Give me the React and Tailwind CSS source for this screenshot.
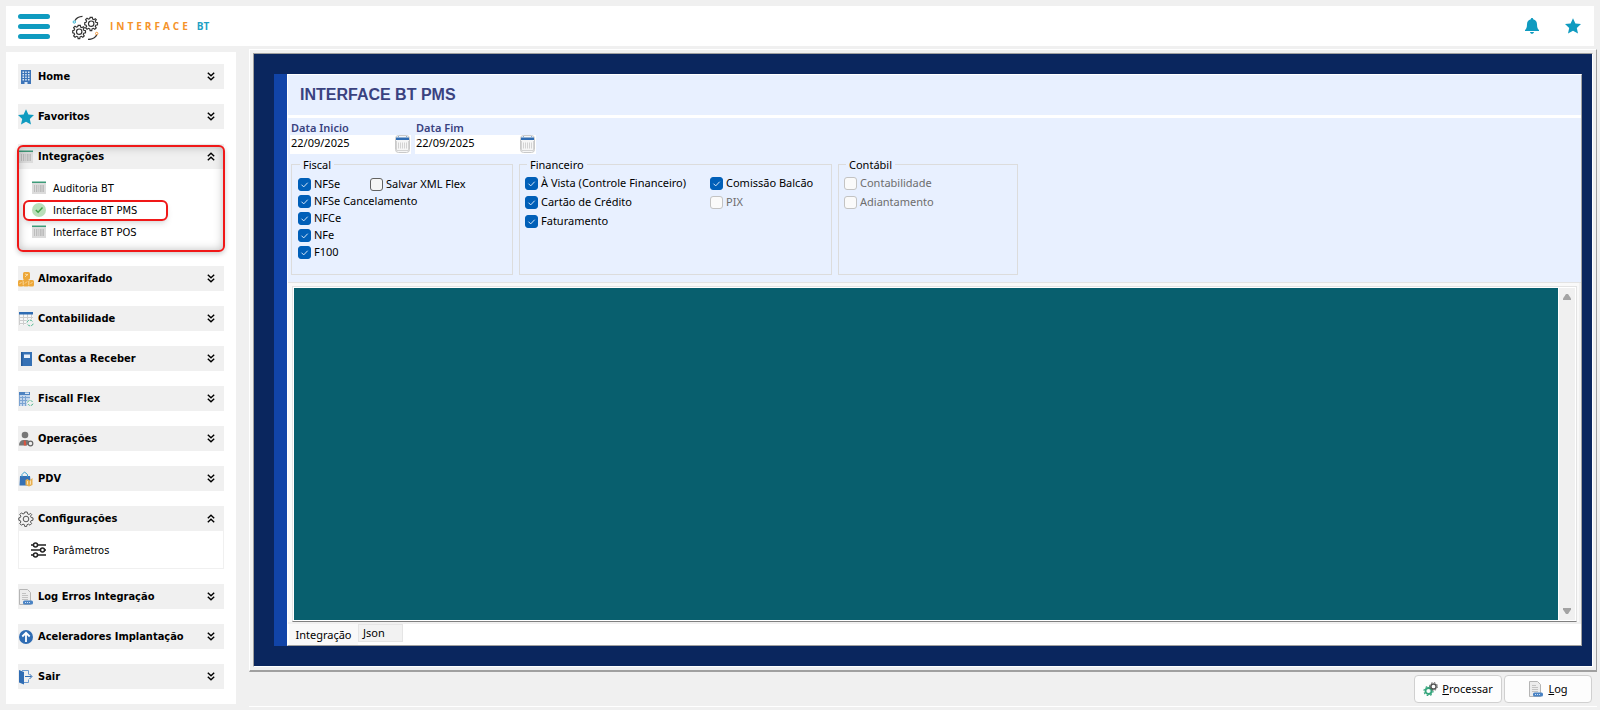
import React, { useState } from 'react';

const Star = () => (
  <svg width="16" height="16" viewBox="0 0 16 16">
    <path fill="#0f9bc0" d="M8 .3l2.400 5.200 5.600.6-4.200 3.800 1.200 5.700L8 12.800l-5 2.800 1.200-5.700L0 6.100l5.600-.6z" />
  </svg>
);

const Bell = () => (
  <svg width="16" height="16" viewBox="0 0 16 16">
    <path fill="#0f9bc0" d="M8 0c.7 0 1.200.5 1.200 1.200C11.600 1.800 13 3.700 13 6.200c0 3.300.8 4.700 2 5.800v1H1v-1c1.200-1.100 2-2.500 2-5.800 0-2.500 1.400-4.400 3.800-5C6.800.5 7.300 0 8 0zM6 14h4c-.2 1.200-1 1.800-2 1.800S6.200 15.200 6 14z" />
  </svg>
);

const gearPath =
  'M6.800 1h2.400l.4 1.900 1.400.6L12.600 2.400l1 1 .1.100L12.500 5.100l.6 1.400 1.900.4v2.300l-1.900.4-.6 1.400 1.100 1.600-1.600 1.600-1.600-1.100-1.400.6-.4 1.900H6.800l-.4-1.900-1.400-.6-1.600 1.100-1.600-1.600 1.100-1.600-.6-1.400L.8 9.200V6.900l1.500-.4.6-1.400L1.800 3.500l1.600-1.600L5 3l1.400-.6z';

const Gear = () => (
  <svg width="16" height="16" viewBox="0 0 16 16" fill="none" stroke="#555">
    <path d={gearPath} />
    <circle cx="8" cy="8" r="2.8" />
  </svg>
);

const Logo = () => (
  <svg width="28" height="28" viewBox="0 0 28 28" fill="none">
    <g stroke="#333" strokeWidth="1.300">
      <g transform="translate(12 4.500) scale(.9)">
        <path d={gearPath} />
        <circle cx="8" cy="8" r="3" />
      </g>
      <g transform="translate(0 12.500) scale(.9)">
        <path d={gearPath} />
        <circle cx="8" cy="8" r="3" />
      </g>
      <path d="M3 8.500C4.500 6 7 4.600 10.500 4.400M25 22.500c-1.500 3-4.700 4.900-9 5" />
    </g>
    <circle cx="2.300" cy="10" r="1.200" stroke="#35b3d1" />
    <circle cx="24.700" cy="21.500" r="1.200" stroke="#f59a3c" />
  </svg>
);

const Building = () => (
  <svg width="16" height="16" viewBox="0 0 16 16">
    <path fill="#3d74b8" d="M3 1h10v14H3z" />
    <path fill="#dce8f5" d="M4.500 2.500H6V4H4.500zM7.200 2.500h1.500V4H7.200zM10 2.500h1.500V4H10zM4.500 5H6v1.500H4.500zM7.200 5h1.500v1.500H7.200zM10 5h1.500v1.500H10zM4.500 7.500H6V9H4.500zM7.200 7.500h1.500V9H7.200zM10 7.500h1.500V9H10zM4.500 10H6v1.500H4.500zM7.200 10h1.500v1.500H7.200zM10 10h1.500v1.500H10zM6.500 13h3v2h-3z" />
  </svg>
);

const Barcode = () => (
  <svg width="16" height="16" viewBox="0 0 16 16">
    <path fill="#dcdcdc" d="M1 2h14v12H1z" />
    <path fill="#3d9b79" d="M1 1.500h14V3H1z" />
    <path stroke="#bdbdbd" d="M3.500 5v7M5.500 5v7M9.500 5v7M12.500 5v7" />
    <path stroke="#c9c9c9" strokeWidth="2" d="M7.500 5v7M11 5v7" />
  </svg>
);

const CheckCircle = () => (
  <svg width="16" height="16" viewBox="0 0 16 16">
    <circle cx="8" cy="8" r="7" fill="#b9dfba" />
    <path d="M4.800 8l2.300 2.300L11.500 5.500" fill="none" stroke="#3fa046" strokeWidth="1.400" />
  </svg>
);

const Boxes = () => (
  <svg width="16" height="16" viewBox="0 0 16 16">
    <g fill="#eda83a">
      <rect x="5" y="1" width="7" height="7.500" rx="1.500" />
      <rect x="0" y="9" width="5.400" height="6.500" rx="1.500" />
      <rect x="5" y="8" width="6" height="7.500" rx="1.500" />
      <rect x="10.600" y="9" width="5.400" height="6.500" rx="1.500" />
    </g>
    <path stroke="#fbe3b8" strokeWidth=".8" fill="none" d="M7 3l3 1M7 6l3-3M1.500 13l2-2M7 12.500l2-2M12.500 13l2-2M5.200 10v4M10.800 10v4" />
  </svg>
);

const TableSync = () => (
  <svg width="16" height="16" viewBox="0 0 16 16" fill="none">
    <path fill="#f7f7f7" d="M1 1h14v13H1z" />
    <path stroke="#cdcdcd" d="M1 6.500h14M1 9.500h14M1 12.500h14M1.500 3v11M5.500 3v11M9.500 3v11M13.500 3v11" />
    <path fill="#2f6cb3" d="M1 1h14v2.500H1z" />
    <circle cx="12" cy="12" r="4" fill="#f0f0f0" />
    <path stroke="#56b894" d="M9 11.500c.4-2.800 4.400-3.300 5.600-.8M15.200 12.700c-.6 2.600-4.400 3-5.700.6" strokeDasharray="3 1" />
  </svg>
);

const Book = () => (
  <svg width="16" height="16" viewBox="0 0 16 16">
    <path fill="#3571b5" d="M3 1h11v14H3z" />
    <path fill="#245a99" d="M3 1h1.500v14H3z" />
    <path fill="#e8f0fa" d="M6 3.500h6v3.500H6z" />
  </svg>
);

const Calculator = () => (
  <svg width="16" height="16" viewBox="0 0 16 16" fill="none">
    <path fill="#c3d6ec" d="M1 1h11v14H1z" />
    <path fill="#4d82c0" d="M1 1h11v3H1z" />
    <path fill="#dce8f5" d="M7 1.500h4v1.500H7z" />
    <path stroke="#7ba3d2" d="M1.500 4v11M4.500 5v10M7.500 5v10M1 6.500h11M1 9.500h11M1 12.500h11" />
    <circle cx="12" cy="12" r="3.600" fill="#f0f0f0" />
    <path stroke="#56b894" d="M9.500 11.500c.4-2.400 3.800-2.800 5-.6M15 12.700c-.6 2.200-3.900 2.500-5 .4" strokeDasharray="3 1" />
  </svg>
);

const UserGear = () => (
  <svg width="16" height="16" viewBox="0 0 16 16">
    <circle cx="7" cy="4" r="3.300" fill="#777" />
    <path fill="#777" d="M1 14.500c0-3.500 1.500-5 4-5.500h4c1.500.4 2.400 1 3 2l-3 3.500z" />
    <path fill="#d9543f" d="M5.800 9.500h1.800l.8 5H5.800z" />
    <circle cx="12.500" cy="12.500" r="2.300" fill="#f0f0f0" stroke="#666" strokeWidth="1.200" />
  </svg>
);

const Bag = () => (
  <svg width="16" height="16" viewBox="0 0 16 16">
    <path fill="#3571b5" d="M2 5h10l1 9.500H1.500z" />
    <path fill="none" stroke="#3a9fd0" d="M4 6V3.500L6.500 1 9.500 3.500V6" />
    <path fill="#e9b04e" d="M7.500 9l2-1 2 1.500L14.500 7v7L11 15.500 7.500 14z" />
    <path stroke="#fae1b2" d="M9.500 10v3.500M12.500 9.500v4" />
  </svg>
);

const Sliders = () => (
  <svg width="16" height="16" viewBox="0 0 16 16" fill="none" stroke="#222" strokeWidth="1.500">
    <path d="M0 3h2.500M6.500 3H15M0 8h9.500M13.500 8H15M0 13h2.500M6.500 13H15" />
    <circle cx="4.500" cy="3" r="2" />
    <circle cx="11.500" cy="8" r="2" />
    <circle cx="4.500" cy="13" r="2" />
  </svg>
);

const LogFile = () => (
  <svg width="16" height="16" viewBox="0 0 16 16">
    <path fill="#ececec" stroke="#b5b5b5" d="M1.500.5h8l3 3v12h-11z" />
    <path stroke="#c2c2c2" d="M4 4.500h4M4 6.500h6M4 8.500h6M4 10.500h6" />
    <rect x="5" y="11.500" width="10" height="4" rx="1.500" fill="#4a83c4" />
    <path stroke="#cfe0f3" d="M7 13.500h6" strokeDasharray="1 1" />
  </svg>
);

const ArrowUp = () => (
  <svg width="16" height="16" viewBox="0 0 16 16">
    <circle cx="8" cy="8" r="7" fill="#2f6cb3" />
    <path d="M8 13V4M4.300 7.500L8 3.800l3.700 3.700" fill="none" stroke="#fff" strokeWidth="1.800" />
  </svg>
);

const Exit = () => (
  <svg width="16" height="16" viewBox="0 0 16 16">
    <path fill="#2f6cb3" d="M1 1l5 2v12.500L1 13.500z" />
    <path fill="none" stroke="#6d9bd0" d="M4 1.500h6.500v4M6 13.500h4.500v-3" />
    <path fill="none" stroke="#2f6cb3" d="M7 7.500h6.500M11.500 5l2.500 2.500L11.500 10" />
  </svg>
);

const Calendar = () => (
  <svg width="15" height="18" viewBox="0 0 15 18" fill="none">
    <rect x=".5" y=".5" width="14" height="17" rx="3" fill="#f6f6f6" stroke="#c9c9c9" />
    <path fill="#2f6cb3" d="M1 2.500h13V5H1z" />
    <path stroke="#8aaed6" d="M3.500 1v2M11.500 1v2" />
    <path stroke="#d3d3d3" d="M3.500 7.500v6M5.500 7.500v6M7.500 7.500v6M9.500 7.500v6M11.500 7.500v6M1.500 6v9.500h12V6" />
  </svg>
);

const Chevrons = ({ up }) => (
  <svg width="8" height="9" viewBox="0 0 8 9" fill="none" stroke="#000" strokeWidth="1.400" className={up ? 'rotate-180' : ''}>
    <path d="M.8.8L4 3.800 7.200.8M.8 4.800L4 7.800l3.200-3" />
  </svg>
);

const menu = [
  { label: 'Home', icon: <Building /> },
  { label: 'Favoritos', icon: <Star /> },
  {
    label: 'Integrações',
    icon: <Barcode />,
    highlight: true,
    items: [
      { label: 'Auditoria BT', icon: <Barcode /> },
      { label: 'Interface BT PMS', icon: <CheckCircle />, highlight: true },
      { label: 'Interface BT POS', icon: <Barcode /> },
    ],
  },
  { label: 'Almoxarifado', icon: <Boxes /> },
  { label: 'Contabilidade', icon: <TableSync /> },
  { label: 'Contas a Receber', icon: <Book /> },
  { label: 'Fiscall Flex', icon: <Calculator /> },
  { label: 'Operações', icon: <UserGear /> },
  { label: 'PDV', icon: <Bag /> },
  { label: 'Configurações', icon: <Gear />, items: [{ label: 'Parâmetros', icon: <Sliders /> }] },
  { label: 'Log Erros Integração', icon: <LogFile /> },
  { label: 'Aceleradores Implantação', icon: <ArrowUp /> },
  { label: 'Sair', icon: <Exit /> },
];

const MenuGroup = ({ group }) => {
  const [open, setOpen] = useState(Boolean(group.items));

  return (
    <div className="relative">
      <button
        onClick={() => setOpen(!open)}
        className="flex h-[25px] w-full items-center bg-[#f0f0f0] pr-[9px] text-[11px] font-bold text-black"
      >
        {group.icon}
        <span className="ml-1 flex-1 pt-[2px] text-left">{group.label}</span>
        <Chevrons up={open} />
      </button>
      {open && group.items && (
        <ul className={`border border-t-0 pt-2 pb-[7px] ${group.highlight ? 'border-transparent' : 'border-[#f0f0f0]'}`}>
          {group.items.map((item) => (
            <li key={item.label} className="relative">
              <a href="#" className="flex h-[22px] items-center gap-[6px] pl-3 text-[11px] text-black">
                {item.icon}
                <span className="pt-[2px]">{item.label}</span>
              </a>
              {item.highlight && (
                <div className="pointer-events-none absolute top-px left-1 h-[21px] w-[145px] rounded-md border-2 border-[#f01818] shadow-md" />
              )}
            </li>
          ))}
        </ul>
      )}
      {/* Highlight frame around the whole group */}
      {open && group.highlight && (
        <div className="pointer-events-none absolute -inset-x-px top-px -bottom-px rounded-md border-2 border-[#f01818] shadow-[inset_0_0_10px_rgba(0,0,0,0.25),0_2px_5px_rgba(0,0,0,0.2)]" />
      )}
    </div>
  );
};

const Check = ({ label, defaultChecked, disabled }) => (
  <label className={`flex h-[13px] items-center gap-[3px] whitespace-nowrap text-[11px] ${disabled ? 'text-[#6d6d6d]' : 'text-black'}`}>
    <span className="relative h-[13px] w-[13px]">
      <input
        type="checkbox"
        defaultChecked={defaultChecked}
        disabled={disabled}
        className="peer block h-[13px] w-[13px] appearance-none rounded-[3px] border border-[#626262] bg-[#f5f5f5] checked:border-[#005fb8] checked:bg-[#005fb8] disabled:border-[#c3c3c3] disabled:bg-[#fafafa]"
      />
      <svg viewBox="0 0 13 13" className="pointer-events-none absolute inset-0 hidden peer-checked:block">
        <path d="M3.500 6.700l2.200 2.200 4-4.200" fill="none" stroke="#d8e8f8" />
      </svg>
    </span>
    {label}
  </label>
);

const Group = ({ title, className, children }) => (
  <fieldset className={`h-[119px] border border-[#dcdcdc] ${className}`}>
    <legend className="ml-[2px] h-4 px-[3px] text-[11px] leading-[18px] text-black">{title}</legend>
    {children}
  </fieldset>
);

const DateField = ({ id, label }) => (
  <div className="w-[121px]">
    <label htmlFor={id} className="block h-[17px] pl-px text-[11px] leading-5 font-semibold text-[#3a4280]">
      {label}
    </label>
    <div className="flex h-[19px] items-start bg-white">
      <input
        id={id}
        type="text"
        defaultValue="22/09/2025"
        className="h-4 w-full min-w-0 pl-px text-[11px] text-black outline-none"
      />
      <button aria-label={label} className="mr-px shrink-0">
        <Calendar />
      </button>
    </div>
  </div>
);

const App = () => {
  return (
    <div className="flex min-h-screen flex-col bg-[#f0f0f0] font-['Noto_Sans',sans-serif]">
      <header className="mx-[6px] mt-[6px] flex h-10 items-center bg-white pr-[13px] pl-3">
        <button aria-label="Menu" className="flex w-8 flex-col gap-[5px]">
          <span className="h-[5px] rounded-full bg-[#0f9bc0]" />
          <span className="h-[5px] rounded-full bg-[#0f9bc0]" />
          <span className="h-[5px] rounded-full bg-[#0f9bc0]" />
        </button>
        <div className="ml-[22px] flex items-center font-['Open_Sans',sans-serif] text-[10px] font-bold">
          <Logo />
          <span className="ml-[10px] tracking-[3px] text-[#f5932a]">INTERFACE</span>
          <span className="ml-[6px] text-[#1f9fc4]">BT</span>
        </div>
        <div className="ml-auto flex gap-[25px]">
          <button aria-label="Notificações">
            <Bell />
          </button>
          <button aria-label="Favoritos">
            <Star />
          </button>
        </div>
      </header>

      <div className="flex flex-1">
        <aside className="mt-[6px] mb-[6px] ml-[6px] flex w-[230px] shrink-0 flex-col gap-[15px] bg-white px-3 pt-3 pb-[15px] font-['DejaVu_Sans_Condensed','DejaVu_Sans',sans-serif]">
          {menu.map((group) => (
            <MenuGroup key={group.label} group={group} />
          ))}
        </aside>

        <main className="mt-[3px] mr-[3px] ml-[13px] flex min-w-0 flex-1 flex-col">
          <div className="flex flex-1 border border-b-2 border-t-white border-r-[#a0a0a0] border-b-[#a0a0a0] border-l-white p-[3px]">
            <div className="flex flex-1 border border-t-[#a0a0a0] border-r-white border-b-white border-l-[#a0a0a0] bg-[#0a265e] py-5 pr-[10px] pl-5">
              <div className="w-[13px] bg-[#1144a8]" />
              <div className="flex min-w-0 flex-1 flex-col border border-t-white border-r-[#a0a0a0] border-b-[#a0a0a0] border-l-white bg-[#e8f0ff]">
                <div className="flex h-[43px] items-center border-b-[3px] border-white pl-3">
                  <h1 className="font-['Liberation_Sans',Arial,sans-serif] text-[16px] font-bold text-[#3a4280]">
                    INTERFACE BT PMS
                  </h1>
                </div>

                <div className="px-[2px] pb-[7px]">
                  <div className="flex gap-1">
                    <DateField id="inicio" label="Data Inicio" />
                    <DateField id="fim" label="Data Fim" />
                  </div>

                  <div className="mt-[2px] flex gap-[6px] pl-px">
                    <Group title="Fiscal" className="w-[222px] pl-[6px]">
                      <div className="flex gap-7 pt-[6px]">
                        <div className="flex w-11 flex-col gap-1">
                          <Check label="NFSe" defaultChecked />
                          <Check label="NFSe Cancelamento" defaultChecked />
                          <Check label="NFCe" defaultChecked />
                          <Check label="NFe" defaultChecked />
                          <Check label="F100" defaultChecked />
                        </div>
                        <Check label="Salvar XML Flex" />
                      </div>
                    </Group>
                    <Group title="Financeiro" className="w-[313px] pl-[5px]">
                      <div className="flex pt-[5px]">
                        <div className="flex w-[185px] flex-col gap-[6px]">
                          <Check label="À Vista (Controle Financeiro)" defaultChecked />
                          <Check label="Cartão de Crédito" defaultChecked />
                          <Check label="Faturamento" defaultChecked />
                        </div>
                        <div className="flex flex-col gap-[6px]">
                          <Check label="Comissão Balcão" defaultChecked />
                          <Check label="PIX" disabled />
                        </div>
                      </div>
                    </Group>
                    <Group title="Contábil" className="w-[180px] pl-[5px]">
                      <div className="flex flex-col gap-[6px] pt-[5px]">
                        <Check label="Contabilidade" disabled />
                        <Check label="Adiantamento" disabled />
                      </div>
                    </Group>
                  </div>
                </div>

                <div className="flex flex-1 flex-col border-t border-[#e3e3e3] bg-white">
                  <div className="flex flex-1 border-r-2 border-b-2 border-[#f0f0f0] bg-[#f9f9f9] pt-[3px] pr-[2px] pl-1">
                    <div className="flex flex-1 border border-t-[#e3e3e3] border-r-[#e3e3e3] border-b-[#808080] border-l-[#e3e3e3] bg-white p-px">
                      <textarea
                        aria-label="Integração"
                        readOnly
                        className="min-w-0 flex-1 resize-none bg-[#085f6e] p-1 text-[11px] text-white outline-none"
                      />
                      <div className="ml-px flex w-4 flex-col items-center justify-between bg-[#f0f0f0] py-[6px]">
                        <button aria-label="Subir">
                          <svg width="8" height="6" viewBox="0 0 8 6">
                            <path fill="#a3a3a3" d="M3 0h2l3 4.500V6H0V4.500z" />
                          </svg>
                        </button>
                        <button aria-label="Descer">
                          <svg width="8" height="6" viewBox="0 0 8 6">
                            <path fill="#a3a3a3" d="M3 6h2l3-4.500V0H0v1.500z" />
                          </svg>
                        </button>
                      </div>
                    </div>
                  </div>
                  <div className="flex items-start pl-px text-[11px] text-black">
                    <button className="h-[21px] w-[69px] bg-[#f9f9f9] pt-[2px]">Integração</button>
                    <button className="h-[18px] w-[45px] border border-[#e5e5e5] bg-[#f2f2f2] pl-1 text-left leading-4">
                      Json
                    </button>
                  </div>
                </div>
              </div>
            </div>
          </div>

          <div className="mt-[3px] mr-[5px] mb-[3px] flex justify-end gap-[2px] text-[11px] text-black">
            <button className="flex h-7 w-[88px] items-center justify-center gap-1 rounded border border-[#d0d0d0] bg-[#fdfdfd]">
              <svg width="15" height="15" viewBox="0 0 15 15" fill="none">
                <circle cx="5.500" cy="9" r="3" stroke="#35a67c" strokeWidth="1.800" />
                <circle cx="5.500" cy="9" r="4.500" stroke="#35a67c" strokeWidth="1.200" strokeDasharray="1.700 1.830" />
                <circle cx="10.500" cy="4.500" r="2.600" stroke="#555" strokeWidth="1.500" />
                <circle cx="10.500" cy="4.500" r="3.900" stroke="#555" strokeDasharray="1.500 1.560" />
              </svg>
              <span>
                <u>P</u>rocessar
              </span>
            </button>
            <button className="flex h-7 w-[88px] items-center justify-center gap-1 rounded border border-[#d0d0d0] bg-[#fdfdfd]">
              <LogFile />
              <span>
                <u>L</u>og
              </span>
            </button>
          </div>
          <div className="mb-[3px] h-px bg-white" />
        </main>
      </div>
    </div>
  );
};

export default App;
